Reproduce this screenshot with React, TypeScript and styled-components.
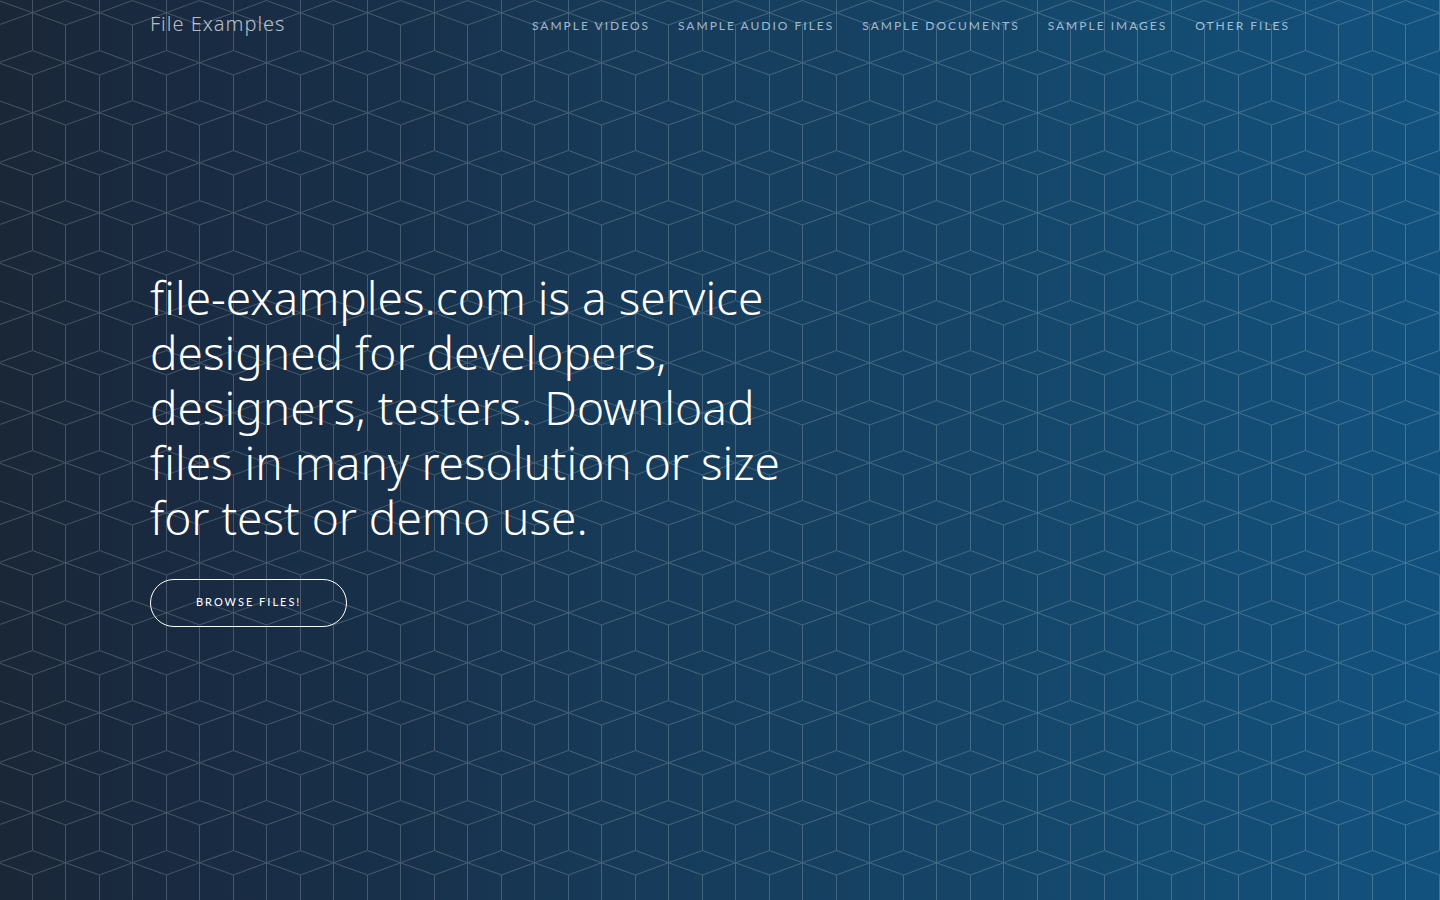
import React from "react";
import styled, { createGlobalStyle } from "styled-components";

const GlobalStyle = createGlobalStyle`
  *, *::before, *::after { box-sizing: border-box; }
  body { margin: 0; background: #16395a; font-family: Lato, sans-serif; color: #fff; }
`;

const Hero = styled.div`
  position: relative;
  isolation: isolate;
  display: flex;
  flex-direction: column;
  min-height: 100vh;
  background: linear-gradient(90deg, #1a2737 0%, #192a41 12%, #18304a 27%, #173a58 42%, #164061 58%, #144a6f 78%, #12517e 100%);
`;

const Lattice = styled.svg`
  position: absolute;
  inset: 0;
  z-index: -1;
  width: 100%;
  height: 100%;
`;

const Header = styled.header`
  width: 100%;
  max-width: 1170px;
  margin: 0 auto;
  padding: 8px 15px 0;
  display: flex;
  align-items: center;
  justify-content: space-between;
`;

const Brand = styled.a`
  font-family: "Noto Sans", sans-serif;
  font-weight: 300;
  font-size: 20px;
  line-height: 32px;
  letter-spacing: 1px;
  color: rgba(255, 255, 255, 0.7);
  text-decoration: none;
`;

const Nav = styled.nav`
  display: flex;
  gap: 28px;
  padding-top: 4px;
`;

const NavLink = styled.a`
  font-size: 12px;
  line-height: 20px;
  letter-spacing: 2px;
  text-transform: uppercase;
  color: rgba(225, 240, 255, 0.7);
  text-decoration: none;
`;

const Content = styled.main`
  flex: 1;
  width: 100%;
  max-width: 1170px;
  margin: 0 auto;
  padding: 0 15px 44px;
  display: flex;
  flex-direction: column;
  align-items: flex-start;
  justify-content: center;
`;

const Title = styled.h1`
  margin: 0 0 34px;
  font-family: "Noto Sans", sans-serif;
  font-weight: 300;
  font-size: 46px;
  line-height: 55px;
`;

const TitleLine = styled.span`
  display: block;
`;

const BrowseButton = styled.button`
  padding: 14px 45px 16px;
  border: 1px solid #fff;
  border-radius: 300px;
  background: transparent;
  color: #fff;
  font-family: Lato, sans-serif;
  font-size: 11px;
  line-height: 16px;
  letter-spacing: 2px;
  text-transform: uppercase;
  cursor: pointer;
`;

const links = ["Sample videos", "Sample audio files", "Sample documents", "Sample images", "Other files"];

const lines = [
  "file-examples.com is a service",
  "designed for developers,",
  "designers, testers. Download",
  "files in many resolution or size",
  "for test or demo use.",
];

export default function App() {
  return (
    <>
      <GlobalStyle />
      <Hero>
        <Lattice aria-hidden="true">
          <defs>
            <pattern id="cubes" width="67" height="100" patternUnits="userSpaceOnUse">
              <g fill="none" stroke="#e2f2f2" strokeWidth="1" opacity="0.22">
                <path d="M32.5 -25V50.5M32.5 75V150.5M65.5 25V100.5" />
                <path d="M-1.5 62.75L32.5 50.5L65.5 62.75L32.5 75L-1.5 62.75M65.5 62.75L99.5 50.5M65.5 62.75L99.5 75" />
                <path d="M32.5 12.75L65.5 0.5L99.5 12.75M32.5 12.75L65.5 25L99.5 12.75M-1.5 0.5L32.5 12.75L-1.5 25" />
              </g>
            </pattern>
          </defs>
          <rect width="100%" height="100%" fill="url(#cubes)" />
        </Lattice>
        <Header>
          <Brand href="#">File Examples</Brand>
          <Nav>
            {links.map((label) => (
              <NavLink key={label} href="#">{label}</NavLink>
            ))}
          </Nav>
        </Header>
        <Content>
          <Title>
            {lines.map((line) => (
              <TitleLine key={line}>{line} </TitleLine>
            ))}
          </Title>
          <BrowseButton type="button">Browse files!</BrowseButton>
        </Content>
      </Hero>
    </>
  );
}
